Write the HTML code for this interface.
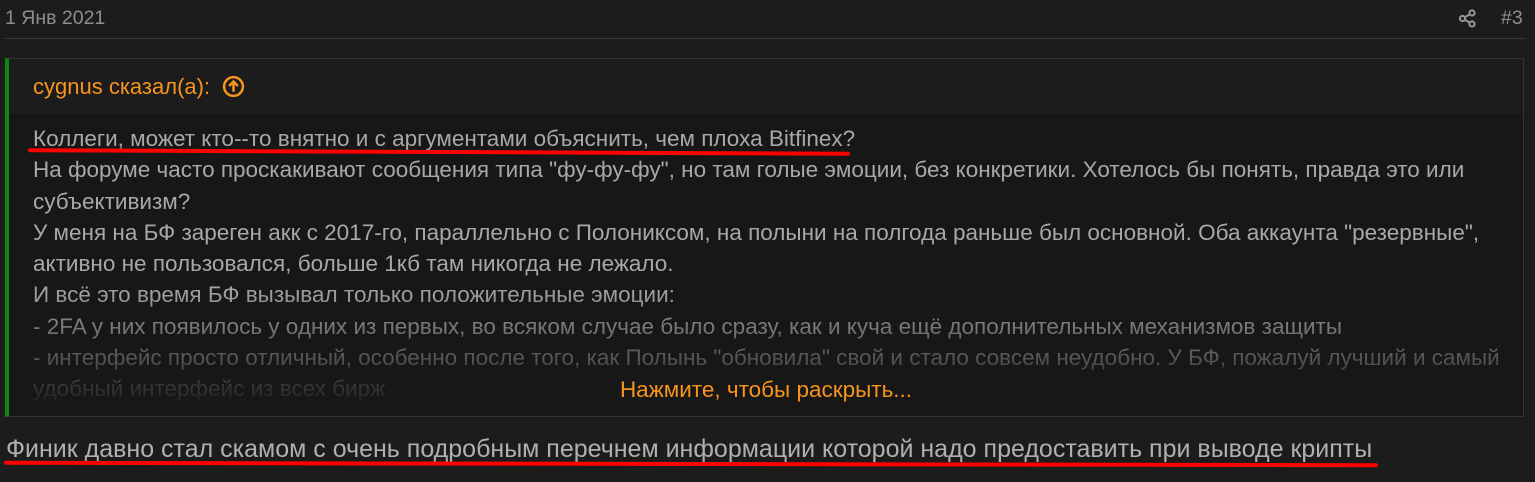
<!DOCTYPE html>
<html><head><meta charset="utf-8"><style>
html,body{margin:0;padding:0;background:#1c1c1c;width:1535px;height:482px;overflow:hidden;font-family:"Liberation Sans",Arial,sans-serif;}
.date{position:absolute;left:5px;top:7px;font-size:19.5px;color:#8e8e8e;}
.num{position:absolute;left:1501px;top:7px;font-size:19.5px;color:#8e8e8e;}
.sep{position:absolute;left:5px;top:38px;width:1520px;height:1px;background:#3a3a3a;}
.quote{position:absolute;left:5px;top:58px;width:1519px;height:359px;border:1px solid #333;border-left:4px solid #0b8a0b;box-sizing:border-box;background:#171717;overflow:hidden;}
.qh{height:55px;background:#1c1c1c;color:#f7941d;font-size:22px;line-height:56px;padding-left:24px;}
.qb{position:relative;padding:9px 0 0 24px;font-size:22.5px;line-height:31.3px;color:#a8a8a8;white-space:nowrap;}
.fade{position:absolute;left:0;right:0;top:170px;height:140px;background:linear-gradient(rgba(23,23,23,0),rgba(23,23,23,.6) 55%,rgba(23,23,23,.97) 90%);}
.more{position:absolute;left:0;right:0;top:318px;text-align:center;color:#f7941d;font-size:22.5px;}
.last{position:absolute;left:6px;top:435px;font-size:25px;color:#b0b0b0;}
.red{position:absolute;height:4px;background:#f00;border-radius:2px;}
</style></head><body>
<div class="date">1 Янв 2021</div>
<svg style="position:absolute;left:1458px;top:9px" width="19" height="19" viewBox="0 0 19 19" fill="none" stroke="#9a9a9a" stroke-width="2"><circle cx="14" cy="4" r="2.6"/><circle cx="4.5" cy="9.5" r="2.6"/><circle cx="14" cy="15" r="2.6"/><path d="M6.8 8.2l5-2.9M6.8 10.8l5 2.9"/></svg>
<div class="num">#3</div>
<div class="sep"></div>
<div class="quote">
<div class="qh">cygnus сказал(а): <svg style="vertical-align:-4px;margin-left:6px" width="23" height="23" viewBox="0 0 22 22" fill="none" stroke="#f7941d" stroke-width="2.4"><circle cx="11" cy="11" r="9"/><path d="M11 16V6.5M6.8 10.5L11 6.3l4.2 4.2"/></svg></div>
<div class="qb">
Коллеги, может кто--то внятно и с аргументами объяснить, чем плоха Bitfinex?<br>
На форуме часто проскакивают сообщения типа "фу-фу-фу", но там голые эмоции, без конкретики. Хотелось бы понять, правда это или<br>
субъективизм?<br>
У меня на БФ зареген акк с 2017-го, параллельно с Полониксом, на полыни на полгода раньше был основной. Оба аккаунта "резервные",<br>
активно не пользовался, больше 1кб там никогда не лежало.<br>
И всё это время БФ вызывал только положительные эмоции:<br>
- 2FA у них появилось у одних из первых, во всяком случае было сразу, как и куча ещё дополнительных механизмов защиты<br>
- интерфейс просто отличный, особенно после того, как Полынь "обновила" свой и стало совсем неудобно. У БФ, пожалуй лучший и самый<br>
удобный интерфейс из всех бирж
<div class="fade"></div>
</div>
<div class="more">Нажмите, чтобы раскрыть...</div>
</div>
<div class="red" style="left:28px;top:150px;width:822px;transform:rotate(0.25deg)"></div>
<div class="last">Финик давно стал скамом с очень подробным перечнем информации которой надо предоставить при выводе крипты</div>
<div class="red" style="left:4px;top:462px;width:1374px;transform:rotate(0.1deg)"></div>
</body></html>
